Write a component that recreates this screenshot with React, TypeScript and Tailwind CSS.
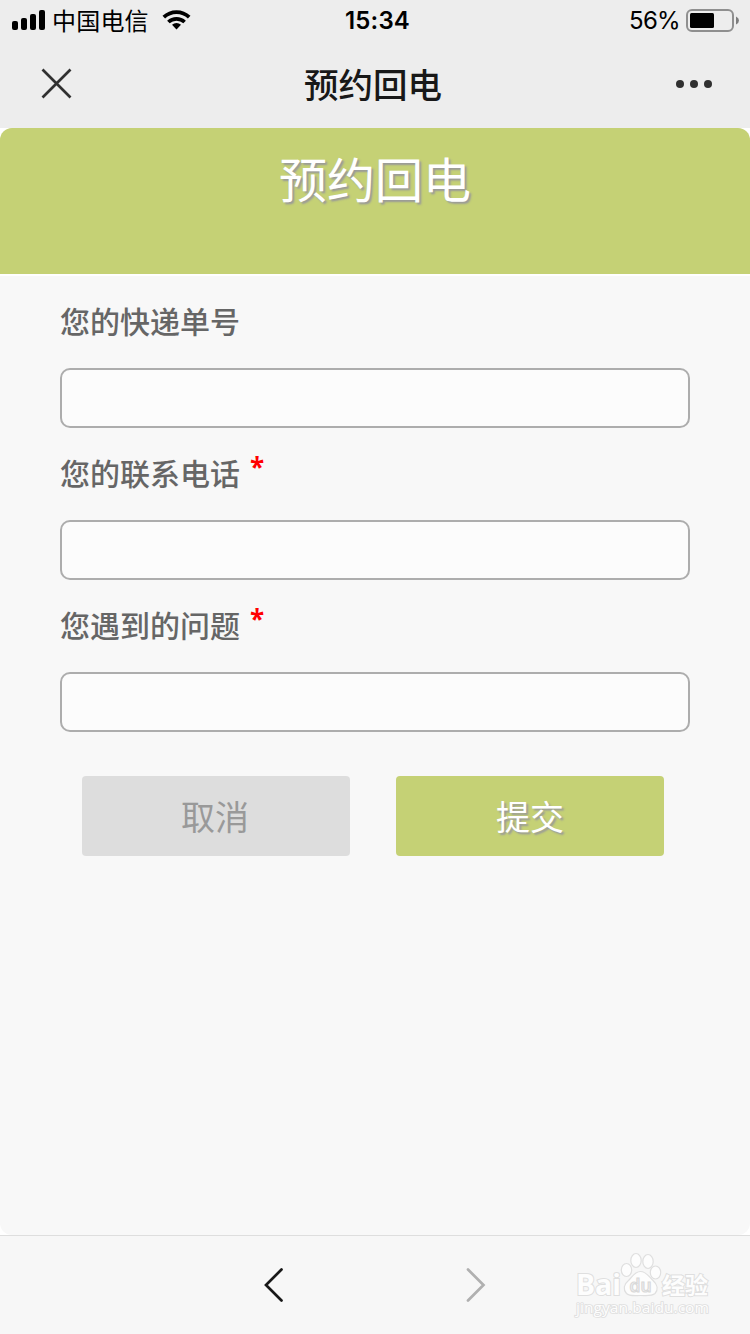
import { useState } from 'react';

interface Field {
  id: string;
  label: string;
  required: boolean;
}

const FIELDS: Field[] = [
  { id: 'tracking', label: '您的快递单号', required: false },
  { id: 'phone', label: '您的联系电话', required: true },
  { id: 'problem', label: '您遇到的问题', required: true },
];

function StatusBar() {
  return (
    <div className="grid h-10 grid-cols-3 items-center pl-3 pr-[11px] text-2xl leading-9 text-black">
      <div className="flex items-center">
        <svg width="34" height="20" viewBox="0 0 34 20" className="shrink-0">
          <rect x="0" y="11" width="6" height="9" rx="2" />
          <rect x="9" y="8" width="6" height="12" rx="2" />
          <rect x="18" y="4" width="6" height="16" rx="2" />
          <rect x="27" y="0" width="6" height="20" rx="2" />
        </svg>
        <span className="ml-[6px] pt-[3px] tracking-[0.2px]">中国电信</span>
        <svg width="30" height="22" viewBox="0 0 30 22" className="ml-[13px] shrink-0">
          <g fill="none" stroke="#000" strokeWidth="3.7">
            <path d="M1.8 8.2a18.3 18.3 0 0 1 25.4 0" />
            <path d="M6.4 13a11.8 11.8 0 0 1 16.2 0" />
          </g>
          <path d="M10 15.8a6.8 6.8 0 0 1 9 0L14.5 20.4z" />
        </svg>
      </div>
      <span className="pl-[4px] pt-[2px] text-center font-semibold tracking-[0.2px]">15:34</span>
      <div className="flex items-center justify-end">
        <span className="mr-[6px] pt-[2px] tracking-[-0.7px]">56%</span>
        <svg width="53" height="24" viewBox="0 0 53 24" className="mt-[2px] shrink-0">
          <rect x="1" y="1" width="46" height="21" rx="5" fill="none" stroke="#8f8f8f" strokeWidth="2" />
          <path d="M50 7.500q3 1.500 3 4t-3 4z" fill="#7d7d7d" />
          <rect x="4" y="4" width="24" height="15" rx="1.500" />
        </svg>
      </div>
    </div>
  );
}

function NavBar({ title }: { title: string }) {
  return (
    <div className="flex h-[88px] items-center justify-between pl-[41px] pr-[38px]">
      <button aria-label="关闭" className="pb-px">
        <svg width="31" height="31" viewBox="0 0 31 31" fill="none" stroke="#303030" strokeWidth="2.700" className="block">
          <path d="M1.500 1.500l28 28M29.500 1.500l-28 28" />
        </svg>
      </button>
      <h1 className="pr-[2px] pt-[5px] text-[34.500px] font-medium leading-none text-[#181818]">{title}</h1>
      <button aria-label="更多" className="flex gap-[6px]">
        <i className="size-2 rounded-full bg-[#303030]" />
        <i className="size-2 rounded-full bg-[#303030]" />
        <i className="size-2 rounded-full bg-[#303030]" />
      </button>
    </div>
  );
}

function Watermark() {
  return (
    <svg
      width="150"
      height="70"
      viewBox="0 0 150 70"
      className="absolute right-[30px] top-[14px] font-['Open_Sans','Noto_Sans_CJK_SC',sans-serif]"
      fill="#fdfdfd"
      stroke="#dfdfdf"
      strokeWidth="1.2"
    >
      <ellipse cx="56.500" cy="20" rx="5.200" ry="6.500" />
      <ellipse cx="66" cy="10.500" rx="5.200" ry="7" />
      <ellipse cx="78" cy="11.500" rx="5.200" ry="7" />
      <ellipse cx="85.500" cy="22.500" rx="5.200" ry="6.500" />
      <path d="M70.500 21.500c-6 0-8 5-12 9-5 4-5.500 9-2 13 3 3 8 2 14 2s11 1 14.500-2c3.500-4 2.500-9-2-13-4.500-4-6.500-9-12.500-9z" />
      <g paintOrder="stroke" strokeWidth="2">
        <text x="6" y="44.500" fontSize="28" fontWeight="700" textLength="45" lengthAdjust="spacingAndGlyphs">Bai</text>
        <text x="92" y="43.500" fontSize="23" fontWeight="700">经验</text>
        <text x="6" y="63" fontSize="14" strokeWidth="1.700" textLength="133" lengthAdjust="spacingAndGlyphs">jingyan.baidu.com</text>
      </g>
      <text x="59.500" y="42" fontSize="18" fontWeight="600" fill="#f4f4f4" stroke="#d9d9d9" textLength="22" lengthAdjust="spacingAndGlyphs">du</text>
    </svg>
  );
}

export default function App() {
  const [values, setValues] = useState<Record<string, string>>({});

  return (
    <div className="flex h-[1334px] w-[750px] flex-col overflow-hidden bg-white font-[Inter,'Noto_Sans_CJK_SC',sans-serif]">
      <header className="h-32 shrink-0 bg-[#ededed]">
        <StatusBar />
        <NavBar title="预约回电" />
      </header>

      <main className="flex h-[1107px] shrink-0 flex-col overflow-hidden rounded-xl bg-[#f8f8f8]">
        <div className="h-[148px] shrink-0 border-b-2 border-white bg-[#c5d175] pt-[17px] text-center">
          <h2 className="text-5xl leading-[72px] text-white [text-shadow:2px_2px_2px_#999]">预约回电</h2>
        </div>

        <form className="px-[60px]" onSubmit={e => e.preventDefault()}>
          {FIELDS.map(field => (
            <div key={field.id}>
              <label htmlFor={field.id} className="flex h-[92px] items-center text-[30px] font-medium text-[#666]">
                {field.label}
                {field.required && (
                  <span className="mb-[14px] ml-[10px] font-['Open_Sans',sans-serif] text-[26px] font-bold text-[#f00]">*</span>
                )}
              </label>
              <input
                id={field.id}
                value={values[field.id] ?? ''}
                onChange={e => setValues({ ...values, [field.id]: e.target.value })}
                className="block h-[60px] w-full rounded-[10px] border-2 border-[#adadad] bg-[#fcfcfc] px-3 text-[28px] outline-none"
              />
            </div>
          ))}

          <div className="mt-11 flex gap-[46px] pl-[22px]">
            <button type="button" className="h-20 w-[268px] rounded bg-[#ddd] pr-[2px] pt-[2px] text-[34px] text-[#999]">
              取消
            </button>
            <button
              type="submit"
              className="h-20 w-[268px] rounded bg-[#c5d175] pt-[2px] text-[34px] text-white [text-shadow:2px_2px_2px_#999]"
            >
              提交
            </button>
          </div>
        </form>
      </main>

      <footer className="relative flex flex-1 justify-center gap-[180px] border-t border-[#dedede] bg-[#f7f7f7] pt-8">
        <button aria-label="后退" className="h-[35px]">
          <svg width="22" height="35" viewBox="0 0 22 35" fill="none" stroke="#181818" strokeWidth="2.700" strokeLinecap="round" className="block">
            <path d="M18.500 1.500L3 17L18.500 32.500" />
          </svg>
        </button>
        <button aria-label="前进" className="h-[35px]">
          <svg width="22" height="35" viewBox="0 0 22 35" fill="none" stroke="#b0b0b0" strokeWidth="2.700" strokeLinecap="round" className="block">
            <path d="M3 1.500L18.500 17L3 32.500" />
          </svg>
        </button>
        <Watermark />
      </footer>
    </div>
  );
}
